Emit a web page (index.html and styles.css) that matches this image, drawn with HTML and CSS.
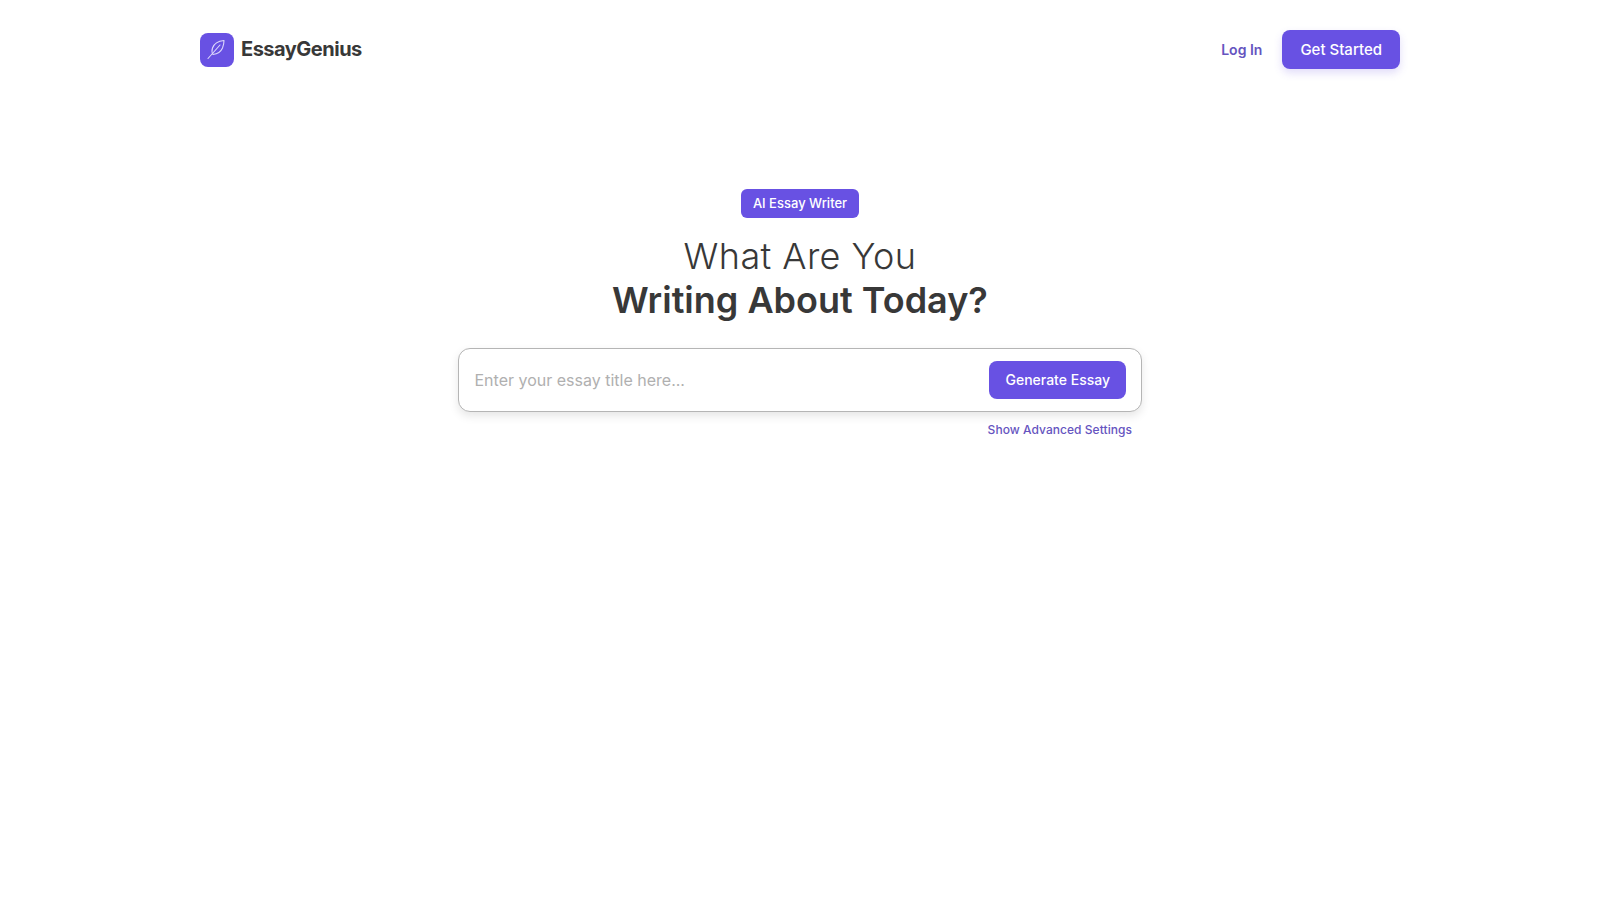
FILE: index.html
```html
<!DOCTYPE html>

<html>
<head>
  <meta name="viewport" content="width=device-width, initial-scale=1.0">
  <meta http-equiv="CONTENT-TYPE" content="text/html; charset=UTF-8">
  <title>EssayGenius</title>
  <link rel="stylesheet" href="styles.css">
</head>
<body>

  <nav class="nav">
    <a class="brand" href="#">
      <span class="brand-icon">
        <svg viewBox="0 0 24 24" width="24" height="24" fill="none" stroke="#ddd8fb" stroke-width="1.1" stroke-linecap="round" stroke-linejoin="round">
          <path d="M19 2.500C14 3 9.200 5 7.500 10c-1 3-.500 5 .500 6.500 4-.500 8-3 9.500-6.500 1-2.500 1.500-5 1.500-7.500z"/>
          <path d="M15 7 3 20.500"/>
        </svg>
      </span>
      <span class="brand-name">EssayGenius</span>
    </a>
    <div class="nav-links">
      <a class="login" href="#">Log In</a>
      <a class="start" href="#">Get Started</a>
    </div>
  </nav>

  <main class="hero">
    <span class="badge">AI Essay Writer</span>
    <h1 class="title">What Are You<br><strong>Writing About Today?</strong></h1>
    <form class="prompt">
      <input type="text" placeholder="Enter your essay title here..." spellcheck="false">
      <button type="button">Generate Essay</button>
    </form>
    <a class="advanced" href="#">Show Advanced Settings</a>
  </main>

</body>
</html>
```

FILE: styles.css
```css
* {
  margin: 0;
  padding: 0;
  box-sizing: border-box;
}

body {
  background: #fff;
  color: #383838;
  font-family: "Inter", "Liberation Sans", sans-serif;
}

a {
  text-decoration: none;
}

.nav {
  width: 1200px;
  height: 99px;
  margin: 0 auto;
  display: flex;
  align-items: center;
  justify-content: space-between;
}

.brand {
  display: flex;
  align-items: center;
  gap: 7px;
}

.brand-icon {
  width: 34px;
  height: 34px;
  border-radius: 8px;
  background: #6851e3;
  display: flex;
  align-items: center;
  justify-content: center;
}

.brand-name {
  color: #383838;
  font-size: 20px;
  font-weight: 700;
  letter-spacing: -0.5px;
  padding-bottom: 2px;
}

.nav-links {
  display: flex;
  align-items: center;
  gap: 20px;
}

.login {
  color: #6554c0;
  font-size: 14px;
  font-weight: 600;
}

.start {
  background: #6851e3;
  color: #fff;
  font-size: 15px;
  font-weight: 500;
  padding: 10px 18px;
  line-height: 19px;
  border-radius: 8px;
  box-shadow: 0 4px 8px rgba(104, 81, 227, 0.2);
}

.hero {
  width: 684px;
  margin: 90px auto 0;
  display: flex;
  flex-direction: column;
  align-items: center;
}

.badge {
  background: #6851e3;
  color: #fff;
  font-size: 13px;
  font-weight: 500;
  line-height: 17px;
  padding: 6px 12px;
  border-radius: 6px;
}

.title {
  margin-top: 16px;
  font-size: 36px;
  font-weight: 300;
  line-height: 44px;
  text-align: center;
  letter-spacing: 0.4px;
}

.title strong {
  font-size: 36px;
  font-weight: 600;
  letter-spacing: 0;
}

.prompt {
  width: 100%;
  height: 64px;
  margin-top: 26px;
  padding: 0 15px;
  background: #fff;
  border: 1px solid #b5b5b5;
  border-radius: 12px;
  box-shadow: 0 4px 10px rgba(0, 0, 0, 0.1);
  display: flex;
  align-items: center;
}

.prompt input {
  flex: 1;
  border: 0;
  outline: 0;
  background: transparent;
  color: #383838;
  font-family: inherit;
  font-size: 16px;
  padding-left: 0.5px;
}

.prompt input::placeholder {
  color: #b0b0b0;
}

.prompt button {
  border: 0;
  background: #6851e3;
  color: #fff;
  font-family: inherit;
  font-size: 14px;
  font-weight: 500;
  line-height: 17px;
  height: 38px;
  padding: 0 16px 1px;
  border-radius: 8px;
  cursor: pointer;
}

.advanced {
  align-self: flex-end;
  margin-top: 10px;
  margin-right: 10px;
  color: #6554c0;
  font-size: 12px;
  font-weight: 500;
  line-height: 15px;
  letter-spacing: 0.05px;
}
```
